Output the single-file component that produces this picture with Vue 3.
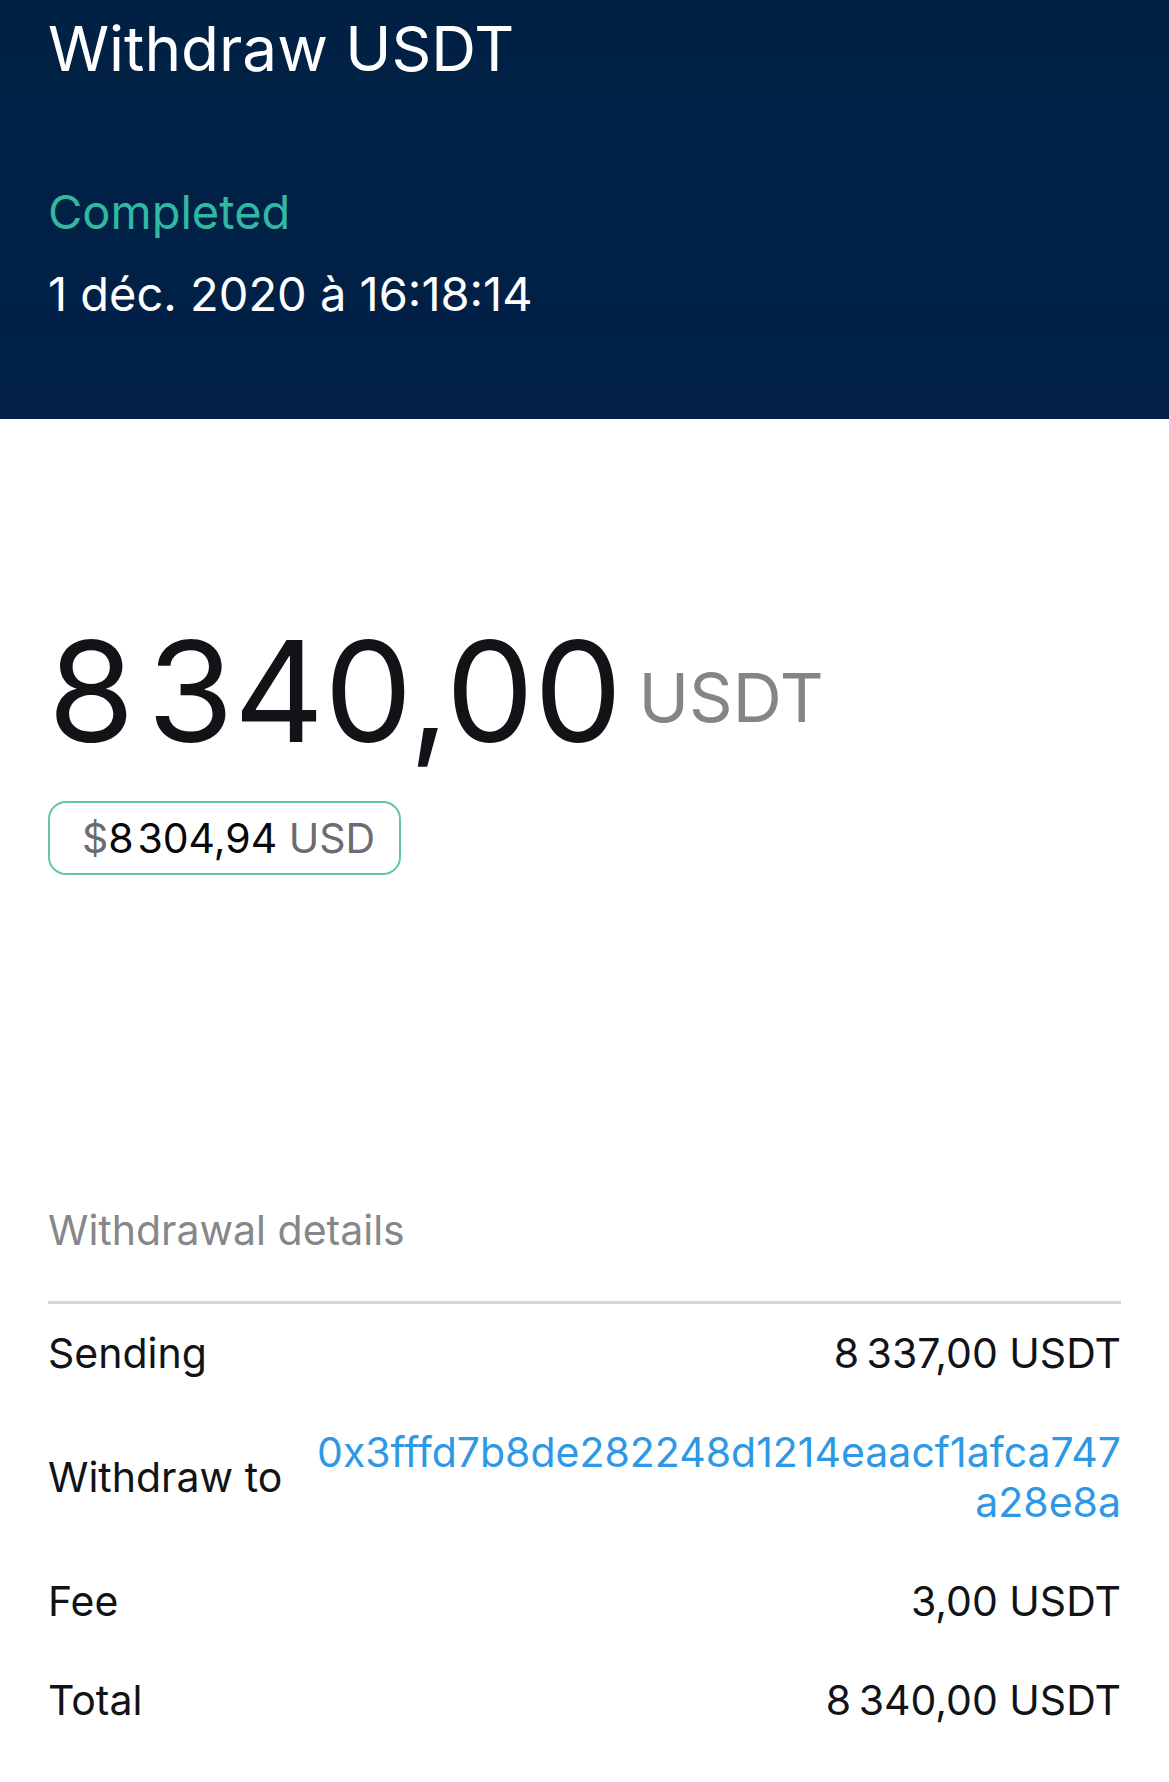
<script setup>
const details = [
  { label: 'Sending', value: '8\u2009337,00 USDT' },
  { label: 'Withdraw to', value: '0x3fffd7b8de282248d1214eaacf1afca747a28e8a', link: true },
  { label: 'Fee', value: '3,00 USDT' },
  { label: 'Total', value: '8\u2009340,00 USDT' }
]
</script>

<template>
  <main class="page">
    <header class="header">
      <h1>Withdraw USDT</h1>
      <p class="status">Completed</p>
      <p class="date">1 déc. 2020 à 16:18:14</p>
    </header>
    <section class="summary">
      <p class="amount">8&#8202;340,00<span class="unit">USDT</span></p>
      <p class="fiat">$<b>8&#8202;304,94</b> USD</p>
    </section>
    <section class="details">
      <h2>Withdrawal details</h2>
      <dl>
        <div v-for="row in details" :key="row.label" class="row">
          <dt>{{ row.label }}</dt>
          <dd>
            <a v-if="row.link" href="#">{{ row.value }}</a>
            <template v-else>{{ row.value }}</template>
          </dd>
        </div>
      </dl>
    </section>
  </main>
</template>

<style>
body { margin: 0; background: #fff; }
</style>

<style scoped>
.page { font-family: Inter, "Liberation Sans", sans-serif; color: #111316; }
h1, h2, p, dl, dd { margin: 0; font-weight: 400; }
.header { padding: 8px 48px 84px; background: linear-gradient(#002144, #022048); color: #fff; }
h1 { font-size: 62px; line-height: 82px; }
.status { margin-top: 81px; font-size: 47px; line-height: 82px; color: #30b8a3; }
.date { font-size: 47px; line-height: 82px; }
.summary { padding: 188px 48px 0; }
.amount { font-size: 140px; line-height: 168px; }
.unit { margin-left: 16px; font-size: 68px; line-height: 68px; vertical-align: 20px; color: #858585; }
.fiat { box-sizing: border-box; width: fit-content; margin-top: 26px; padding: 0 24px 0 32px; border: 2px solid #65c5ac; border-radius: 18px; font-size: 41px; line-height: 70px; color: #6b6b72; }
.fiat b { font-weight: 400; color: #08080a; }
.details { padding: 330px 48px 32px; font-size: 41px; line-height: 50px; }
h2 { padding-bottom: 46px; border-bottom: 3px solid #d5d5d5; font-size: 41px; line-height: 50px; color: #85878b; }
.row { display: flex; align-items: center; justify-content: space-between; gap: 24px; padding: 24px 0 25px; }
dt { flex: none; }
dd { text-align: right; overflow-wrap: anywhere; }
a { color: #2e98e5; text-decoration: none; }
</style>
